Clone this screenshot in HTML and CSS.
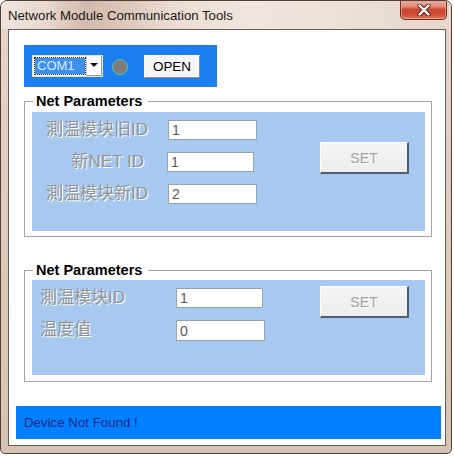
FILE: index.html
```html
<!DOCTYPE html>
<html lang="zh-CN">
<head>
<meta charset="utf-8">
<title>Network Module Communication Tools</title>
<link rel="stylesheet" href="styles.css">
</head>
<body>
<div class="window">
  <div class="titlebar">
    <span class="title">Network Module Communication Tools</span>
    <div class="close">
      <svg width="14" height="12" viewBox="0 0 14 12">
        <path d="M2.5 1.5 L11.5 10.5 M11.5 1.5 L2.5 10.5" stroke="#5a2018" stroke-width="4.2" stroke-linecap="round" fill="none"/>
        <path d="M2.5 1.5 L11.5 10.5 M11.5 1.5 L2.5 10.5" stroke="#ffffff" stroke-width="2.4" stroke-linecap="round" fill="none"/>
      </svg>
    </div>
  </div>
  <div class="client">
    <div class="toolbar">
      <div class="combo">
        <div class="combo-text"><span class="combo-sel">COM1</span></div>
        <div class="combo-btn"><span class="tri"></span></div>
      </div>
      <span class="led"></span>
      <button class="btn-open" type="button">OPEN</button>
    </div>

    <fieldset class="group g1">
      <legend>Net Parameters</legend>
      <div class="panel p1">
        <div class="fields f1">
          <span class="lbl">測温模块旧ID</span>
          <input class="edit" readonly value="1">
          <span class="lbl lbl-mid">新NET ID</span>
          <input class="edit e-narrow" readonly value="1">
          <span class="lbl">測温模块新ID</span>
          <input class="edit" readonly value="2">
        </div>
        <button class="btn-set s1" type="button">SET</button>
      </div>
    </fieldset>

    <fieldset class="group g2">
      <legend>Net Parameters</legend>
      <div class="panel p2">
        <div class="fields f2">
          <span class="lbl lbl-left">測温模块ID</span>
          <input class="edit e-narrow" readonly value="1">
          <span class="lbl lbl-left">温度值</span>
          <input class="edit e-wide" readonly value="0">
        </div>
        <button class="btn-set s2" type="button">SET</button>
      </div>
    </fieldset>

    <div class="status">Device Not Found !</div>
  </div>
</div>
</body>
</html>
```

FILE: styles.css
```css
* { box-sizing: border-box; }

html, body {
  margin: 0;
  padding: 0;
  background: #ffffff;
}

body {
  font-family: "Liberation Sans", Arial, sans-serif;
  width: 454px;
  height: 456px;
  overflow: hidden;
}

.window {
  width: 452px;
  height: 454px;
  border: 1px solid #4d4039;
  border-radius: 7px 7px 5px 5px;
  background: linear-gradient(180deg, #e6d6ca 0%, #dccab9 60%, #d6c2b0 100%);
  display: flex;
  flex-direction: column;
  overflow: hidden;
}

.titlebar {
  height: 28px;
  flex: none;
  display: flex;
  align-items: flex-start;
  background:
    linear-gradient(90deg, #efe4dd 0%, #e8d8ce 10%, #d3bbab 19%, #dcc6b8 27%, #ebdcd2 38%, #f0e6df 55%, #ece0d8 75%, #e6d6cc 100%);
}

.title {
  font-size: 13.2px;
  color: #1a1a1a;
  line-height: 16px;
  padding: 7px 0 0 7px;
  white-space: nowrap;
}

.close {
  margin-left: auto;
  margin-right: 4px;
  margin-top: -1px;
  width: 47px;
  height: 20px;
  border: 1px solid #6e2a20;
  border-top: none;
  border-radius: 0 0 5px 5px;
  background: linear-gradient(180deg, #eab0a2 0%, #e08a76 35%, #c9452c 50%, #cf5238 80%, #dc7a60 100%);
  display: flex;
  align-items: center;
  justify-content: center;
  box-shadow: inset 0 0 0 1px rgba(255, 210, 200, 0.45);
}

.client {
  margin-left: 7px;
  width: 438px;
  height: 417px;
  flex: none;
  background: #ffffff;
  border: 1px solid #6b5d55;
  display: flex;
  flex-direction: column;
  align-items: flex-start;
}

/* ---------- top blue toolbar ---------- */
.toolbar {
  margin: 15px 0 0 15px;
  width: 193px;
  height: 42px;
  background: #1b7ff0;
  display: flex;
  align-items: center;
  padding-left: 8px;
}

.combo {
  width: 71px;
  height: 22px;
  display: flex;
  background: #ffffff;
  border: 1px solid #e8e6b8;
  margin-top: -1px;
}

.combo-text {
  flex: 1;
  padding: 2px 1px 2px 2px;
  background: #ffffe8;
}

.combo-sel {
  display: block;
  height: 100%;
  background: #3e8fee;
  outline: 1px dotted #202020;
  color: #d8ecff;
  font-size: 13px;
  line-height: 16px;
  padding-left: 2px;
}

.combo-btn {
  width: 16px;
  background: #ffffff;
  border-left: 1px solid #d0d0d0;
  border-right: 1px solid #a0a0a0;
  border-bottom: 1px solid #a0a0a0;
  display: flex;
  align-items: center;
  justify-content: center;
}

.tri {
  width: 0;
  height: 0;
  border-left: 4px solid transparent;
  border-right: 4px solid transparent;
  border-top: 4px solid #111111;
}

.led {
  width: 16px;
  height: 16px;
  border-radius: 50%;
  background: #7b7b7b;
  border: 1px solid #5fc4a8;
  margin-left: 9px;
  margin-top: 1px;
}

.btn-open {
  margin-left: 16px;
  width: 56px;
  height: 23px;
  padding: 0;
  font-family: "Liberation Sans", Arial, sans-serif;
  font-size: 13.4px;
  color: #000000;
  background: #f5f5f5;
  border: 1px solid;
  border-color: #ffffff #8c8c8c #8c8c8c #ffffff;
}

/* ---------- group boxes ---------- */
.group {
  margin: 0 0 0 15px;
  width: 408px;
  border: 1px solid #a3a3a3;
  min-width: 0;
}

.group legend {
  margin-left: 1px;
  padding: 0 6px 0 3px;
  font-size: 14.5px;
  font-weight: bold;
  line-height: 16px;
  color: #000000;
}

.g1 {
  margin-top: 6px;
  padding: 3px 6px 5px 7px;
}

.g2 {
  margin-top: 25px;
  padding: 2px 6px 6px 7px;
}

.panel {
  background: #a8c9ef;
  display: flex;
  align-items: flex-start;
}

.p1 { height: 119px; }
.p2 { height: 95px; }

.fields {
  display: grid;
  row-gap: 12px;
  padding-top: 8px;
}

.f1 {
  grid-template-columns: 116px 89px;
  column-gap: 20px;
}

.f2 {
  grid-template-columns: 136px 89px;
  padding-left: 8px;
}

.lbl {
  height: 20px;
  line-height: 20px;
  font-family: "Liberation Sans", "Noto Sans CJK SC", sans-serif;
  font-size: 17px;
  color: #949494;
  text-shadow: 1px 1px 0 #ffffff;
  text-align: right;
  white-space: nowrap;
}

.lbl-mid { padding-right: 4px; }
.lbl-left { text-align: left; }

.edit {
  width: 89px;
  height: 20px;
  margin: 0;
  padding: 0 0 0 3px;
  border: 1px solid #94a3b6;
  background: #ffffff;
  font-family: "Liberation Sans", Arial, sans-serif;
  font-size: 14px;
  color: #5a5a5a;
  outline: none;
}

.f1 .e-narrow { width: 87px; margin-left: -1px; }
.f2 .e-narrow { width: 87px; }
.f2 .e-wide { width: 89px; height: 21px; }

.btn-set {
  margin-left: auto;
  margin-right: 16px;
  width: 89px;
  height: 32px;
  padding: 0;
  font-family: "Liberation Sans", Arial, sans-serif;
  font-size: 14.2px;
  color: #a2a2a2;
  text-shadow: 1px 1px 0 #ffffff;
  background: linear-gradient(180deg, #f4f4f4 0%, #ededed 100%);
  border: 1px solid;
  border-color: #ffffff #4f5d6e #4f5d6e #ffffff;
  border-width: 1px 2px 2px 1px;
}

.s1 { margin-top: 30px; }
.s2 { margin-top: 6px; }

/* ---------- status bar ---------- */
.status {
  margin: 24px 0 0 7px;
  width: 425px;
  height: 33px;
  background: #0080ff;
  color: #1b2a80;
  font-size: 13.3px;
  line-height: 33px;
  padding-left: 8px;
}
```
